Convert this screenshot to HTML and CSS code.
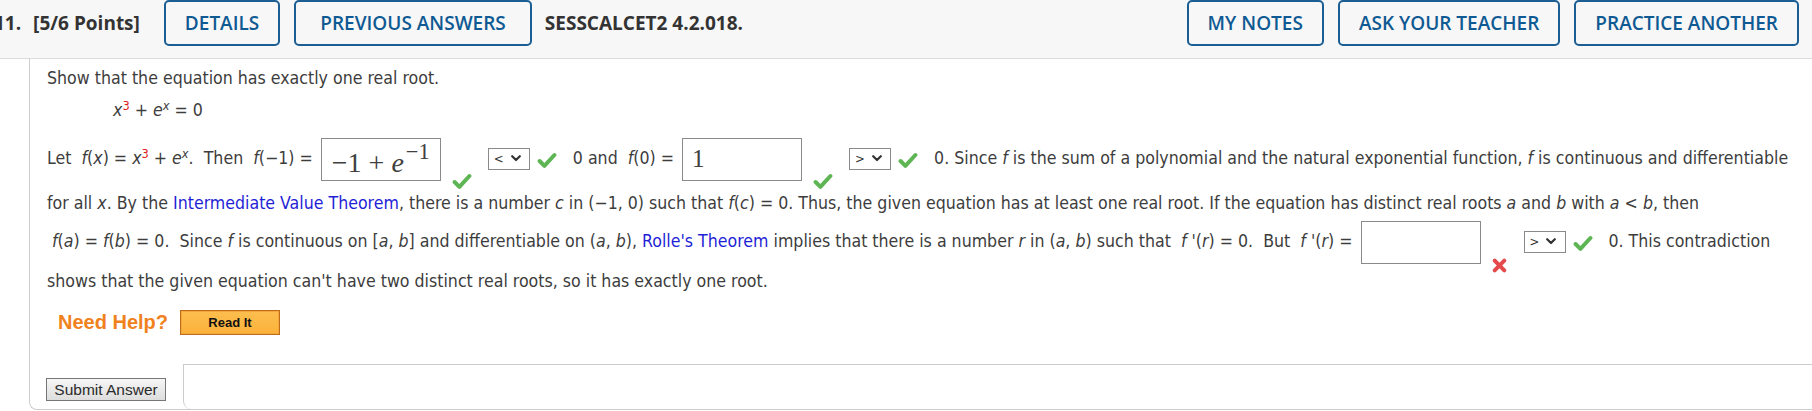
FILE: index.html
```html
<!DOCTYPE html>
<html>
<head>
<meta charset="utf-8">
<link rel="stylesheet" href="styles.css">
</head>
<body>
<header class="hdr">
  <div class="qnum">11. <span class="pts">[5/6 Points]</span></div>
  <span class="btn first">DETAILS</span>
  <span class="btn wide">PREVIOUS ANSWERS</span>
  <div class="qid">SESSCALCET2 4.2.018.</div>
  <div class="spacer"></div>
  <span class="btn">MY NOTES</span>
  <span class="btn">ASK YOUR TEACHER</span>
  <span class="btn">PRACTICE ANOTHER</span>
</header>
<main class="content">
  <div class="line l1">Show that the equation has exactly one real root.</div>
  <div class="line l2"><i>x</i><sup class="red">3</sup> + <i>e</i><sup><i>x</i></sup> = 0</div>
  <div class="line l3">Let&nbsp; <i>f</i>(<i>x</i>) = <i>x</i><sup class="red">3</sup> + <i>e</i><sup><i>x</i></sup>.&nbsp; Then&nbsp; <i>f</i>(−1) = <span class="ans"><span class="m">−1 + <i>e</i><sup>−1</sup></span></span><svg class="below" viewBox="0 0 20 17" width="20" height="17"><path d="M2.6 9 L7.4 13.8 L17.4 3" fill="none" stroke="#5db553" stroke-width="4" stroke-linecap="round" stroke-linejoin="round"/></svg><span class="sel">&lt;<svg class="chev" viewBox="0 0 10 7" width="10" height="7"><path d="M1.2 1.2 L5 5 L8.8 1.2" fill="none" stroke="#333" stroke-width="2.2" stroke-linecap="round" stroke-linejoin="round"/></svg></span><svg class="ok" viewBox="0 0 20 17" width="20" height="17"><path d="M2.6 9 L7.4 13.8 L17.4 3" fill="none" stroke="#5db553" stroke-width="4" stroke-linecap="round" stroke-linejoin="round"/></svg><span class="after">0 and&nbsp; <i>f</i>(0) = </span><span class="ans"><span class="m small">1</span></span><svg class="below" viewBox="0 0 20 17" width="20" height="17"><path d="M2.6 9 L7.4 13.8 L17.4 3" fill="none" stroke="#5db553" stroke-width="4" stroke-linecap="round" stroke-linejoin="round"/></svg><span class="sel">&gt;<svg class="chev" viewBox="0 0 10 7" width="10" height="7"><path d="M1.2 1.2 L5 5 L8.8 1.2" fill="none" stroke="#333" stroke-width="2.2" stroke-linecap="round" stroke-linejoin="round"/></svg></span><svg class="ok" viewBox="0 0 20 17" width="20" height="17"><path d="M2.6 9 L7.4 13.8 L17.4 3" fill="none" stroke="#5db553" stroke-width="4" stroke-linecap="round" stroke-linejoin="round"/></svg><span class="after">0. Since <i>f</i> is the sum of a polynomial and the natural exponential function, <i>f</i> is continuous and differentiable</span></div>
  <div class="line l4">for all <i>x</i>. By the <a class="lnk">Intermediate Value Theorem</a>, there is a number <i>c</i> in (−1, 0) such that <i>f</i>(<i>c</i>) = 0. Thus, the given equation has at least one real root. If the equation has distinct real roots <i>a</i> and <i>b</i> with <i>a</i> &lt; <i>b</i>, then</div>
  <div class="line l5">&nbsp;<i>f</i>(<i>a</i>) = <i>f</i>(<i>b</i>) = 0.&nbsp; Since <i>f</i> is continuous on [<i>a</i>, <i>b</i>] and differentiable on (<i>a</i>, <i>b</i>), <a class="lnk">Rolle's Theorem</a> implies that there is a number <i>r</i> in (<i>a</i>, <i>b</i>) such that&nbsp; <i>f</i> '(<i>r</i>) = 0.&nbsp; But&nbsp; <i>f</i> '(<i>r</i>) = <span class="ans"></span><svg class="below bad" viewBox="0 0 17 17" width="17" height="17"><path d="M3.7 3.7 L13.3 13.3 M13.3 3.7 L3.7 13.3" fill="none" stroke="#e5494b" stroke-width="4" stroke-linecap="round"/></svg><span class="sel">&gt;<svg class="chev" viewBox="0 0 10 7" width="10" height="7"><path d="M1.2 1.2 L5 5 L8.8 1.2" fill="none" stroke="#333" stroke-width="2.2" stroke-linecap="round" stroke-linejoin="round"/></svg></span><svg class="ok" viewBox="0 0 20 17" width="20" height="17"><path d="M2.6 9 L7.4 13.8 L17.4 3" fill="none" stroke="#5db553" stroke-width="4" stroke-linecap="round" stroke-linejoin="round"/></svg><span class="after">0. This contradiction</span></div>
  <div class="line l6">shows that the given equation can't have two distinct real roots, so it has exactly one root.</div>
  <div class="help"><span class="need">Need Help?</span><span class="readit">Read It</span></div>
  <div class="submitrow">
    <div class="subcell"><span class="submit">Submit Answer</span></div>
    <div class="subbox"></div>
  </div>
</main>
</body>
</html>
```
FILE: styles.css
```css
html, body {
  margin: 0;
  padding: 0;
  background: #ffffff;
  overflow: hidden;
}

.hdr {
  display: flex;
  align-items: flex-start;
  height: 58px;
  box-sizing: content-box;
  border-bottom: 1px solid #dcdcdc;
  background: #f7f7f7;
  padding-right: 13px;
  font-family: "Open Sans", sans-serif;
  font-stretch: normal;
  font-size: 19px;
  white-space: nowrap;
}

.qnum {
  margin-left: -6px;
  line-height: 46px;
  font-weight: 700;
  color: #333333;
}

.pts {
  margin-left: 7px;
}

.btn {
  display: block;
  height: 46px;
  box-sizing: border-box;
  border: 2px solid #1a5e94;
  border-radius: 5px;
  padding: 0 19px;
  line-height: 42px;
  color: #0f5a93;
  font-weight: 600;
  margin-left: 14px;
}

.btn.first {
  margin-left: 24px;
}

.btn.wide {
  padding: 0 24px;
}

.qid {
  margin-left: 13px;
  line-height: 46px;
  font-weight: 700;
  color: #333333;
}

.spacer {
  flex: 1;
}

.content {
  margin-left: 29px;
  height: 351px;
  box-sizing: border-box;
  border-left: 1px solid #cccccc;
  border-bottom: 1px solid #cccccc;
  border-bottom-left-radius: 8px;
  padding: 4px 0 0 17px;
  font-family: "DejaVu Sans Condensed", "DejaVu Sans", sans-serif;
  font-stretch: condensed;
  font-size: 17.6px;
  color: #3d3d3d;
}

.line {
  white-space: nowrap;
  line-height: 30px;
}

.line i {
  font-style: italic;
}

.line sup {
  font-size: 0.72em;
  line-height: 0;
  vertical-align: 0.48em;
}

.red {
  color: #e02020;
}

.l2 {
  margin-top: 2px;
  padding-left: 66px;
}

.l3 {
  margin-top: 3px;
  height: 60px;
  line-height: 60px;
}

.l5 {
  height: 46px;
  line-height: 46px;
}

.l6 {
  margin-top: 2px;
}

.lnk {
  color: #1f1fd6;
  text-decoration: none;
}

.ans {
  display: inline-block;
  vertical-align: middle;
  width: 120px;
  height: 43px;
  box-sizing: border-box;
  border: 1px solid #8a8a8a;
  background: #ffffff;
  line-height: normal;
  margin-left: 3px;
}

.m {
  display: block;
  font-family: "Liberation Serif", "DejaVu Serif", serif;
  font-stretch: normal;
  color: #404040;
  font-size: 28px;
  line-height: 1;
  padding: 10px 0 0 10px;
  white-space: nowrap;
}

.m sup {
  font-size: 0.8em;
  vertical-align: 0.55em;
  margin-left: 2px;
}

.m.small {
  font-size: 25px;
  padding: 7px 0 0 9px;
}

.below {
  display: inline-block;
  vertical-align: -26px;
  margin-left: 11px;
}

.below.bad {
  vertical-align: -27px;
  margin-left: 10px;
}

.sel {
  display: inline-block;
  vertical-align: middle;
  width: 42px;
  height: 22px;
  box-sizing: border-box;
  border: 1px solid #8a8a8a;
  background: #ffffff;
  margin-left: 16px;
  padding-left: 5px;
  font-size: 13px;
  line-height: 19px;
  color: #333333;
}

.chev {
  margin-left: 7px;
  vertical-align: 1px;
}

.ok {
  display: inline-block;
  vertical-align: -5px;
  margin-left: 7px;
}

.after {
  margin-left: 16px;
}

.help {
  margin-top: 10px;
  height: 30px;
  line-height: 30px;
  padding-left: 11px;
  white-space: nowrap;
}

.need {
  font-family: "Liberation Sans", Arial, sans-serif;
  font-weight: 700;
  font-size: 20px;
  color: #f0821e;
  vertical-align: middle;
}

.readit {
  display: inline-block;
  vertical-align: middle;
  margin-left: 12px;
  width: 100px;
  height: 25px;
  box-sizing: border-box;
  border: 1px solid #c06b1c;
  box-shadow: inset 0 0 0 1px #f3a83a;
  background: linear-gradient(#fdbe4e, #fbb23c);
  text-align: center;
  font-family: "Liberation Sans", Arial, sans-serif;
  font-weight: 700;
  font-size: 13px;
  line-height: 23px;
  color: #111111;
}

.submitrow {
  display: flex;
  margin: 28px 0 0 -17px;
  height: 45px;
}

.subcell {
  width: 153px;
  padding: 14px 0 0 16px;
  box-sizing: border-box;
}

.submit {
  display: block;
  width: 120px;
  height: 23px;
  box-sizing: border-box;
  border: 1px solid #767676;
  background: linear-gradient(#f6f6f6, #dddddd);
  text-align: center;
  font-family: "Liberation Sans", Arial, sans-serif;
  font-size: 15.5px;
  line-height: 21px;
  color: #2a2a2a;
}

.subbox {
  flex: 1;
  border-top: 1px solid #cccccc;
  border-left: 1px solid #cccccc;
  border-bottom-left-radius: 8px;
}
```
